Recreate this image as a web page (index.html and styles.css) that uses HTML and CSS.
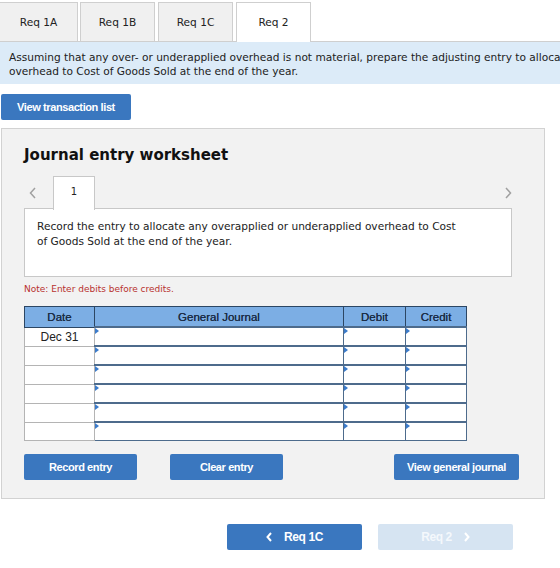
FILE: index.html
```html
<!DOCTYPE html>
<html>

<head>
  <meta charset="UTF-8">
  <link rel="stylesheet" href="styles.css">
</head>

<body>
  <div class="tabs">
    <div class="tab tab-first">Req 1A</div>
    <div class="tab">Req 1B</div>
    <div class="tab">Req 1C</div>
    <div class="tab active">Req 2</div>
  </div>

  <div class="prompt">
    Assuming that any over- or underapplied overhead is not material, prepare the adjusting entry to allocate<br>
    overhead to Cost of Goods Sold at the end of the year.
  </div>

  <button class="btn btn-list">View transaction list</button>

  <div class="worksheet">
    <h3 class="ws-title">Journal entry worksheet</h3>

    <div class="ws-nav">
      <span class="chev">
        <svg width="7" height="12" viewBox="0 0 7 12"><path d="M6 1 L1.5 6 L6 11" fill="none" stroke="#a0a0a0" stroke-width="1.5"/></svg>
      </span>
      <div class="ws-tab">1</div>
      <span class="chev chev-right">
        <svg width="7" height="12" viewBox="0 0 7 12"><path d="M1 1 L5.5 6 L1 11" fill="none" stroke="#a0a0a0" stroke-width="1.5"/></svg>
      </span>
    </div>

    <div class="ws-desc">
      Record the entry to allocate any overapplied or underapplied overhead to Cost<br>
      of Goods Sold at the end of the year.
    </div>

    <p class="note">Note: Enter debits before credits.</p>

    <table class="journal">
      <thead>
        <tr>
          <th class="col-date">Date</th>
          <th class="col-acct">General Journal</th>
          <th class="col-debit">Debit</th>
          <th class="col-credit">Credit</th>
        </tr>
      </thead>
      <tbody>
        <tr>
          <td class="date">Dec 31</td>
          <td class="cell"><i></i></td>
          <td class="cell"><i></i></td>
          <td class="cell"><i></i></td>
        </tr>
        <tr>
          <td class="date"></td>
          <td class="cell"><i></i></td>
          <td class="cell"><i></i></td>
          <td class="cell"><i></i></td>
        </tr>
        <tr>
          <td class="date"></td>
          <td class="cell"><i></i></td>
          <td class="cell"><i></i></td>
          <td class="cell"><i></i></td>
        </tr>
        <tr>
          <td class="date"></td>
          <td class="cell"><i></i></td>
          <td class="cell"><i></i></td>
          <td class="cell"><i></i></td>
        </tr>
        <tr>
          <td class="date"></td>
          <td class="cell"><i></i></td>
          <td class="cell"><i></i></td>
          <td class="cell"><i></i></td>
        </tr>
        <tr>
          <td class="date"></td>
          <td class="cell"><i></i></td>
          <td class="cell"><i></i></td>
          <td class="cell"><i></i></td>
        </tr>
      </tbody>
    </table>

    <div class="ws-actions">
      <button class="btn btn-ws">Record entry</button>
      <button class="btn btn-ws btn-clear">Clear entry</button>
      <button class="btn btn-ws btn-journal">View general journal</button>
    </div>
  </div>

  <div class="pager">
    <button class="btn btn-page">
      <svg width="6" height="10" viewBox="0 0 6 10"><path d="M5 1 L1.5 5 L5 9" fill="none" stroke="white" stroke-width="2"/></svg>
      Req 1C
    </button>
    <button class="btn btn-page disabled">
      Req 2
      <svg width="6" height="10" viewBox="0 0 6 10"><path d="M1 1 L4.5 5 L1 9" fill="none" stroke="white" stroke-width="2"/></svg>
    </button>
  </div>
</body>

</html>
```

FILE: styles.css
```css
body {
  margin: 0;
  width: 560px;
  font-family: 'DejaVu Sans', Verdana, sans-serif;
  color: #222;
  background: white;
  overflow: hidden;
}

.tabs {
  display: flex;
  gap: 3px;
  padding-top: 2px;
}

.tab {
  width: 73px;
  height: 38px;
  line-height: 38px;
  text-align: center;
  font-size: 10.6px;
  background: #f0f0f0;
  border: 1px solid #cfcfcf;
  border-bottom: none;
}

.tab-first {
  width: 77px;
  border-left: none;
  margin-right: -1px;
}

.tab.active {
  background: white;
  height: 39px;
  margin-bottom: -1px;
  position: relative;
}

.prompt {
  height: 28px;
  padding: 8px 9px 6px;
  background: #dcebf8;
  border-top: 1px solid #cfcfcf;
  font-size: 10.6px;
  line-height: 14px;
  white-space: nowrap;
  overflow: hidden;
}

.btn {
  border: none;
  border-radius: 2px;
  background: #3a77bf;
  color: white;
  font-family: 'Liberation Sans', Arial, sans-serif;
  font-weight: bold;
  font-size: 11px;
  letter-spacing: -0.4px;
  cursor: pointer;
}

.btn-list {
  display: block;
  width: 130px;
  height: 26px;
  margin: 10px 0 0 1px;
}

.worksheet {
  margin: 8px 0 0 1px;
  width: 520px;
  height: 347px;
  padding: 16px 0 6px 22px;
  background: #f2f2f2;
  border: 1px solid #d2d2d2;
}

.ws-title {
  margin: 0;
  font-size: 15px;
  line-height: 20px;
  font-weight: bold;
  color: #111;
}

.ws-nav {
  display: flex;
  align-items: center;
  margin-top: 10px;
  width: 488px;
  height: 33px;
}

.chev {
  display: flex;
  width: 29px;
  padding-left: 5px;
  box-sizing: border-box;
  padding-top: 2px;
}

.chev-right {
  margin-left: auto;
  width: auto;
  padding: 2px 0 0 0;
}

.ws-tab {
  width: 42px;
  height: 34px;
  line-height: 30px;
  text-align: center;
  font-size: 10px;
  background: white;
  border: 1px solid #c8c8c8;
  border-bottom: none;
  box-sizing: border-box;
  position: relative;
  top: 1px;
  z-index: 1;
}

.ws-desc {
  width: 488px;
  height: 69px;
  box-sizing: border-box;
  padding: 10px 12px;
  background: white;
  border: 1px solid #c8c8c8;
  font-size: 10.6px;
  line-height: 15px;
}

.note {
  margin: 5px 0 0 0;
  height: 14px;
  line-height: 14px;
  font-size: 9px;
  color: #b8312f;
}

.journal {
  margin-top: 10px;
  width: 442px;
  border-collapse: collapse;
  font-family: 'Liberation Sans', Arial, sans-serif;
  table-layout: fixed;
}

.journal th {
  height: 19px;
  padding: 0;
  background: #7caee4;
  border: 1px solid #2c4663;
  font-size: 11.5px;
  font-weight: normal;
  color: #1b2c45;
  text-shadow: 0 0 0.3px #1b2c45;
}

.col-date {
  width: 69px;
}

.col-acct {
  width: 248px;
}

.col-debit {
  width: 61px;
}

.col-credit {
  width: 60px;
}

.journal td {
  height: 17px;
  padding: 0;
  background: white;
}

.journal td.date {
  border: 1px solid #b4b4b4;
  text-align: center;
  font-size: 12px;
  color: #222;
}

.journal td.cell {
  border: 1px solid #4d6b8c;
  border-top-width: 2px;
  position: relative;
}

.journal td.cell i {
  position: absolute;
  top: 0;
  left: 0;
  width: 0;
  height: 0;
  border-top: 3px solid transparent;
  border-bottom: 3px solid transparent;
  border-left: 4px solid #3b7bcb;
}

.ws-actions {
  display: flex;
  margin-top: 13px;
  width: 495px;
}

.btn-ws {
  width: 113px;
  height: 26px;
}

.btn-clear {
  margin-left: 33px;
}

.btn-journal {
  width: 125px;
  margin-left: auto;
}

.pager {
  display: flex;
  gap: 16px;
  margin: 25px 0 0 227px;
}

.btn-page {
  display: flex;
  align-items: center;
  justify-content: center;
  gap: 12px;
  width: 135px;
  height: 26px;
  font-size: 12px;
}

.btn-page.disabled {
  background: #d6e4f2;
  color: #f4f8fc;
}
```
